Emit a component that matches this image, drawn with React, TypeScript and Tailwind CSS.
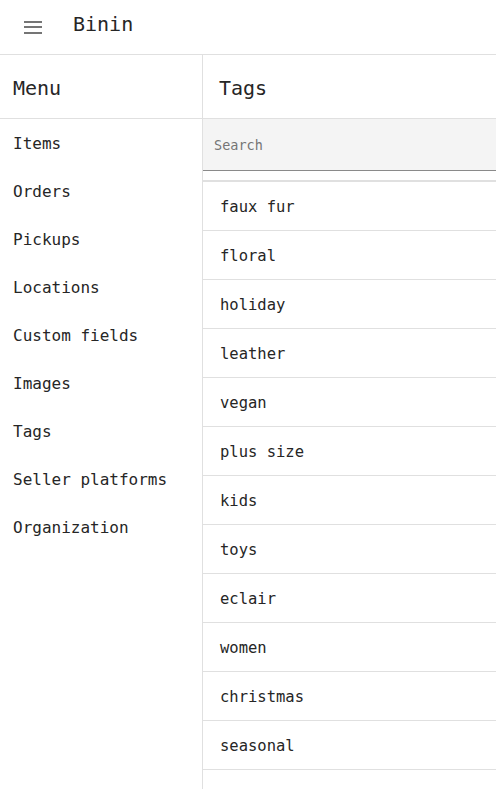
const MENU = [
  "Items",
  "Orders",
  "Pickups",
  "Locations",
  "Custom fields",
  "Images",
  "Tags",
  "Seller platforms",
  "Organization",
];

const TAGS = [
  "faux fur",
  "floral",
  "holiday",
  "leather",
  "vegan",
  "plus size",
  "kids",
  "toys",
  "eclair",
  "women",
  "christmas",
  "seasonal",
];

export default function App() {
  return (
    <div
      className="h-[789px] w-[496px] overflow-hidden bg-white text-[#262626] flex flex-col"
      style={{ fontFamily: '"DejaVu Sans Mono", "Liberation Mono", monospace' }}
    >
      {/* Top bar */}
      <header className="h-[55px] shrink-0 border-b border-[#e0e0e0] flex items-center">
        <button className="ml-[24px] flex flex-col gap-[3.5px] w-[18px]">
          <span className="block h-[2px] w-[18px] bg-[#757575]" />
          <span className="block h-[2px] w-[18px] bg-[#757575]" />
          <span className="block h-[2px] w-[18px] bg-[#757575]" />
        </button>
        <span className="ml-[31px] text-[20px] -mt-[6px]">Binin</span>
      </header>

      <div className="flex flex-1 min-h-0">
        {/* Sidebar */}
        <aside className="w-[203px] shrink-0 border-r border-[#e0e0e0] flex flex-col">
          <div className="h-[64px] border-b border-[#e0e0e0] flex items-center px-[13px] pt-[2px] text-[20px]">
            Menu
          </div>
          <nav className="flex flex-col">
            {MENU.map((m) => (
              <div key={m} className="h-[48px] flex items-center px-[13px] pt-[2px] text-[16px]">
                {m}
              </div>
            ))}
          </nav>
        </aside>

        {/* Main */}
        <main className="flex-1 flex flex-col min-w-0">
          <div className="h-[64px] border-b border-[#e0e0e0] flex items-center px-[16px] pt-[2px] text-[20px]">
            Tags
          </div>
          <div className="h-[52px] bg-[#f4f4f4] border-b border-[#8a8a8a] flex items-center px-[11px]">
            <span className="text-[13.5px] text-[#757575] mt-[2px]">Search</span>
          </div>
          <ul className="mt-[9px] border-t-2 border-[#e0e0e0]">
            {TAGS.map((t) => (
              <li
                key={t}
                className="h-[49px] border-b border-[#e0e0e0] flex items-center px-[17px] pt-[4px] text-[15.5px]"
              >
                {t}
              </li>
            ))}
          </ul>
        </main>
      </div>
    </div>
  );
}
